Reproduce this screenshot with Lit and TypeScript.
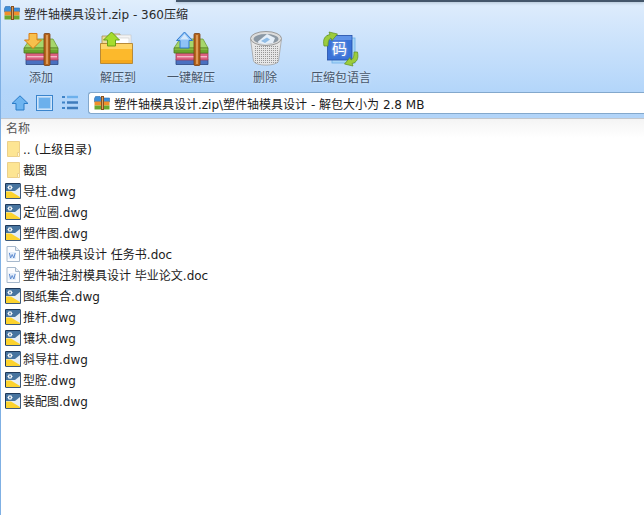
import { LitElement, html, css, svg } from "lit";
import { customElement } from "lit/decorators.js";

const rarSmall = () => html`<svg class="ic16" viewBox="0 0 16 16" width="16" height="16">
  <path d="M0.5 3.5 L1.5 1.5 H6 L7 3 H15.5 V7 H0.5Z" fill="#3f8fd8" stroke="#2c6aa8" stroke-width=".6"/>
  <rect x="0.5" y="6.5" width="15" height="4" fill="#f0902a"/>
  <rect x="0.5" y="10.5" width="15" height="4" fill="#6aa82e"/>
  <rect x="7" y="1" width="3" height="14" fill="#8a4f1c"/>
  <rect x="8" y="2" width="1" height="12" fill="#d9a465"/>
</svg>`;

const book = (arrow: unknown) => html`<svg viewBox="0 0 40 38" width="40" height="38">
  <path d="M5 29.5 H37 V34.5 H5Z" fill="#4a70c0" stroke="#2b4680" stroke-width=".8"/>
  <path d="M5 23 H37 V30 H5Z" fill="#dc5f80" stroke="#a23a58" stroke-width=".8"/>
  <rect x="6" y="26" width="30" height="1.4" fill="#f3b8c6"/>
  <path d="M9 9 H32 L37 18 H3Z" fill="#a6d66c" stroke="#6f9a38" stroke-width=".8"/>
  <path d="M3 18 H37 V23 H3Z" fill="#6ba32f" stroke="#4f7a1e" stroke-width=".8"/>
  <rect x="3.5" y="18.5" width="33" height="1.2" fill="#8fc24c"/>
  <rect x="23" y="3.5" width="6" height="32" rx="1" fill="#b5651d" stroke="#7a3f10" stroke-width=".8"/>
  <rect x="25" y="5" width="2" height="29" fill="#dd9a55"/>
  ${arrow}
</svg>`;

const addIcon = () => book(svg`<path d="M8 3.5 H16 V10 H20.5 L12 18.5 L3.5 10 H8Z" fill="#f8c04c" stroke="#d97c14" stroke-width="1"/>`);
const unpackAll = () => book(svg`<path d="M13.5 2 L21.5 10.5 H18 V18 H9 V10.5 H5.5Z" fill="#8fc2f6" stroke="#2f7ad0" stroke-width="1"/><path d="M13.5 4 L18 9.5 H9Z" fill="#d4e8fc"/>`);

const folderBig = () => html`<svg viewBox="0 0 40 38" width="40" height="38">
  <path d="M4 6 H10 L12 4 H22 V14 H4Z" fill="#eedb9c" stroke="#a89050" stroke-width=".8"/>
  <rect x="18" y="5" width="15" height="12" fill="#f4f4f4" stroke="#c4c4c4" stroke-width=".6"/>
  <rect x="9" y="8" width="22" height="10" fill="#fff" stroke="#c8c8c8" stroke-width=".6"/>
  <path d="M2.5 13.5 H34.5 V33.5 H2.5Z" fill="#fcb92c" stroke="#b88a38" stroke-width="1"/>
  <path d="M3 14 H34 V19 H3Z" fill="#ffd467"/>
  <path d="M3 30 H34 V33 H3Z" fill="#f5a81c"/>
  <path d="M13.5 2 L21.5 10 H17.5 V16 H9.5 V10 H5.5Z" fill="#a5dc2c" stroke="#5d9a12" stroke-width=".9"/>
</svg>`;

const dots = () => {
  const out: unknown[] = [];
  for (let y = 16; y < 33; y += 2) {
    for (let x = 8; x < 31; x += 2) {
      out.push(svg`<rect x=${x} y=${y} width="1" height="1" fill="#959595"/>`);
    }
  }
  return out;
};
const trash = () => html`<svg viewBox="0 0 36 38" width="36" height="38">
  <path d="M3.5 9 L6.5 31 C8 36.5 30 36.5 31.5 31 L34.5 9Z" fill="#e6e6e6" stroke="#a2a2a2" stroke-width=".8"/>
  ${dots()}
  <ellipse cx="19" cy="8.5" rx="15.5" ry="7" fill="#dcdcdc" stroke="#9a9a9a" stroke-width="1"/>
  <ellipse cx="19" cy="9" rx="12.5" ry="5" fill="#8b98a4"/>
  <path d="M11 11.5 L20 4 L28 8 L26 13 C20 14.5 15 14.5 11 12.5Z" fill="#e4eef8"/>
  <path d="M14 11 L20 7.5 L23 9.5 L18 13Z" fill="#8fbce6"/>
</svg>`;

const lang = () => html`<svg viewBox="0 0 38 38" width="38" height="38">
  <rect x="10" y="8" width="23" height="25" fill="#a8d6f8" stroke="#6cb0e8" stroke-width=".8"/>
  <rect x="5.5" y="5.5" width="24.5" height="24.5" fill="#3a72d8" stroke="#244fa8" stroke-width=".8"/>
  <rect x="6" y="6" width="23.5" height="4" fill="#5f93e8"/>
  <text x="17.5" y="23.5" text-anchor="middle" class="ma">码</text>
  <path d="M2 16 C0.5 9 3 5.5 8 4.5 L7 2 L15.5 4 L10 10.5 L9 8 C7 9 6 11 6 16Z" fill="#9ccc3c" stroke="#5f8f1c" stroke-width=".7"/>
  <path d="M35.5 22 C37 29 34.5 32.5 30 33.5 L31 36 L22.5 34 L28 27.5 L29 30 C31 29 32 27 32 22Z" fill="#9ccc3c" stroke="#5f8f1c" stroke-width=".7"/>
</svg>`;

const dwg = () => html`<svg class="ic16" viewBox="0 0 16 16" width="16" height="16">
  <rect x="1" y="1" width="14" height="14" fill="#e6eef6"/>
  <path d="M1 1 H15 V4 L10 8 H1Z" fill="#47749f"/>
  <path d="M1 8.5 H6 L15 14 V15 H1Z" fill="#fcd32e"/>
  <path d="M5 2 V7 M2.5 4.5 H7.5 M3.2 2.8 L6.8 6.2 M6.8 2.8 L3.2 6.2" stroke="#fff" stroke-width="1.1"/>
  <circle cx="5" cy="4.5" r=".9" fill="#47749f"/>
  <path d="M.5 15.5 V.5 H15.5" fill="none" stroke="#1f3a5c"/>
  <path d="M15.5 1 V15.5 H1" fill="none" stroke="#3d5a7c"/>
</svg>`;

const doc = () => html`<svg class="ic16" viewBox="0 0 16 16" width="16" height="16">
  <path d="M2 .5 H10.5 L14.5 4.5 V15.5 H2 Z" fill="#fbfcfe" stroke="#a6b8cc"/>
  <path d="M10.5 .5 V4.5 H14.5" fill="#e8edf3" stroke="#a6b8cc"/>
  <rect x="3.5" y="6" width="7.5" height="7" fill="#e3edfa"/>
  <path d="M4.4 7 L5.6 12 L7.2 8.5 L8.8 12 L10.2 7" fill="none" stroke="#5f8cd0" stroke-width="1"/>
</svg>`;

const folder = () => html`<svg class="ic16" viewBox="0 0 16 16" width="16" height="16">
  <path d="M2.5 .5 H14.5 V11.5 H12.5 V15.5 H2.5Z" fill="#fde593" stroke="#ecd08a"/>
  <path d="M12.5 15.5 V11.5 H14.5 V15.5Z" fill="#fff6d8" stroke="#ecd08a"/>
</svg>`;

const files: [string, () => unknown][] = [
  [".. (上级目录)", folder],
  ["截图", folder],
  ["导柱.dwg", dwg],
  ["定位圈.dwg", dwg],
  ["塑件图.dwg", dwg],
  ["塑件轴模具设计 任务书.doc", doc],
  ["塑件轴注射模具设计 毕业论文.doc", doc],
  ["图纸集合.dwg", dwg],
  ["推杆.dwg", dwg],
  ["镶块.dwg", dwg],
  ["斜导柱.dwg", dwg],
  ["型腔.dwg", dwg],
  ["装配图.dwg", dwg],
];

const tools: [string, () => unknown][] = [
  ["添加", addIcon],
  ["解压到", folderBig],
  ["一键解压", unpackAll],
  ["删除", trash],
  ["压缩包语言", lang],
];

@customElement("app-root")
export class AppRoot extends LitElement {
  static styles = css`
    :host {
      display: block;
      width: 644px;
      height: 515px;
      background: #fff;
      font-family: "DejaVu Sans", "Noto Sans CJK SC", sans-serif;
      font-size: 12px;
      color: #1c1c1c;
      overflow: hidden;
    }
    .win {
      height: 515px;
      box-sizing: border-box;
      border-left: 1px solid #7fb0e4;
      display: flex;
      flex-direction: column;
    }
    .head {
      height: 118px;
      flex: none;
      background: linear-gradient(#e0eefc 0, #d8e9fc 15px, #b4d6fa 90px, #b2d4f8 118px);
    }
    .strip {
      height: 2px;
      margin-left: 175px;
      background: #44566a;
      box-shadow: 0 1px 3px rgba(70, 90, 110, 0.35);
    }
    .title {
      height: 22px;
      margin-bottom: 2px;
      display: flex;
      align-items: center;
      gap: 4px;
      padding-left: 3px;
      color: #2a2a2a;
    }
    .tools {
      height: 65px;
      display: grid;
      grid-template-columns: 74px 80px 66px 82px 70px;
      padding-left: 3px;
    }
    .tool {
      display: flex;
      flex-direction: column;
      align-items: center;
      color: #46566a;
      text-shadow: 0 0 3px rgba(255, 255, 255, 0.7);
      line-height: 14px;
    }
    .tool .icon {
      height: 38px;
      margin-top: 4px;
      margin-bottom: 3px;
      display: flex;
      justify-content: center;
    }
    .nav {
      display: flex;
      height: 22px;
      margin-top: 1px;
      padding-left: 9px;
      align-items: center;
    }
    .nav svg {
      flex: none;
      display: block;
    }
    .up { margin-left: 1px; }
    .box { margin-left: 7px; }
    .lst { margin-left: 9px; }
    .addr {
      margin-left: 10px;
      flex: 1;
      height: 20px;
      display: flex;
      align-items: center;
      gap: 4px;
      padding-left: 5px;
      background: #fff;
      border: 1px solid #83a8cc;
      border-right: none;
      border-radius: 3px 0 0 3px;
      color: #1a1a1a;
    }
    .cols {
      flex: none;
      height: 20px;
      box-sizing: border-box;
      border-top: 1px solid #c2c6cc;
      background: linear-gradient(#f4f4f4, #fff);
      padding: 2px 0 0 5px;
      line-height: 16px;
      color: #555;
    }
    .list {
      padding-left: 4px;
    }
    .row {
      height: 21px;
      display: flex;
      align-items: center;
      gap: 2px;
      white-space: nowrap;
    }
    .ic16 {
      flex: none;
      display: block;
    }
    .ma {
      fill: #fff;
      font-size: 15px;
      font-family: "Noto Sans CJK SC", sans-serif;
    }
  `;

  render() {
    return html`<div class="win">
      <div class="head">
        <div class="strip"></div>
        <div class="title">${rarSmall()}<span>塑件轴模具设计.zip - 360压缩</span></div>
        <div class="tools">
          ${tools.map(
            ([label, icon]) => html`<div class="tool">
              <div class="icon">${icon()}</div>
              <span>${label}</span>
            </div>`
          )}
        </div>
        <div class="nav">
          <svg class="up" viewBox="0 0 18 16" width="18" height="16">
            <path d="M9 .8 L17 8.5 H13 V15 H5 V8.5 H1Z" fill="#6db4f0" stroke="#2b7cc8"/>
          </svg>
          <svg class="box" viewBox="0 0 17 16" width="17" height="16">
            <rect x=".5" y=".5" width="16" height="15" fill="#cfe4fa" stroke="#3a84cc"/>
            <rect x="2.5" y="2.5" width="12" height="11" fill="#6cb0ec" stroke="#a8d0f4"/>
          </svg>
          <svg class="lst" viewBox="0 0 16 16" width="16" height="16">
            <path d="M0 2 H3 M0 7.5 H3 M0 13 H3" stroke="#3f84c8" stroke-width="2"/>
            <path d="M5 2 H16" stroke="#6cb0ec" stroke-width="2.4"/>
            <path d="M5 7.5 H16 M5 13 H16" stroke="#3f7cbc" stroke-width="2.4"/>
          </svg>
          <div class="addr">${rarSmall()}<span>塑件轴模具设计.zip\\塑件轴模具设计 - 解包大小为 2.8 MB</span></div>
        </div>
      </div>
      <div class="cols">名称</div>
      <div class="list">
        ${files.map(([name, icon]) => html`<div class="row">${icon()}<span>${name}</span></div>`)}
      </div>
    </div>`;
  }
}
